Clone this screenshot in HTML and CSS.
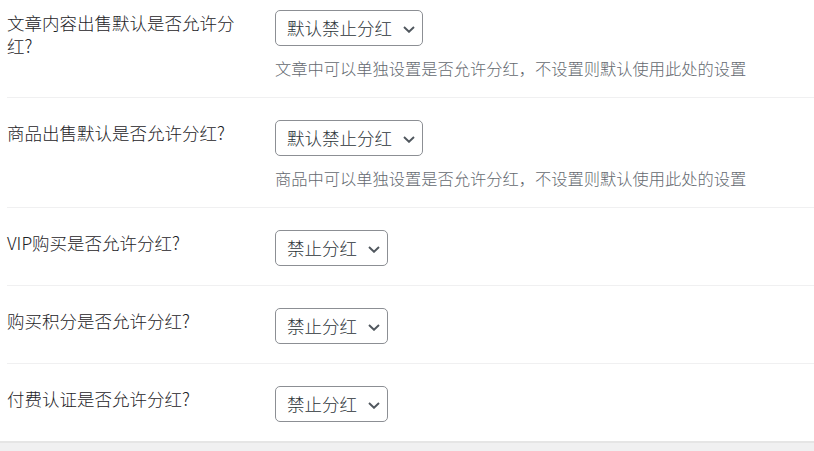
FILE: index.html
```html
<!DOCTYPE html>
<html lang="zh-CN">
<head>
    <meta charset="UTF-8">
    <meta name="viewport" content="width=device-width, initial-scale=1.0">
    <title>分红设置</title>
    <link rel="stylesheet" href="styles.css">
</head>
<body>
    <div id="settings-panel">
        <table class="form-table">
            <tr>
                <th><label for="post-share">文章内容出售默认是否允许分红?</label></th>
                <td>
                    <div class="field">
                        <span class="select-wrap">
                            <select id="post-share" name="post-share">
                                <option>默认禁止分红</option>
                                <option>默认允许分红</option>
                            </select>
                            <svg class="chevron" viewBox="0 0 12 7" width="12" height="7"><path d="M1 1 L6 5.8 L11 1" fill="none" stroke="#50575e" stroke-width="1.9"/></svg>
                        </span>
                        <p class="description">文章中可以单独设置是否允许分红，不设置则默认使用此处的设置</p>
                    </div>
                </td>
            </tr>
            <tr>
                <th><label for="goods-share">商品出售默认是否允许分红?</label></th>
                <td>
                    <div class="field">
                        <span class="select-wrap">
                            <select id="goods-share" name="goods-share">
                                <option>默认禁止分红</option>
                                <option>默认允许分红</option>
                            </select>
                            <svg class="chevron" viewBox="0 0 12 7" width="12" height="7"><path d="M1 1 L6 5.8 L11 1" fill="none" stroke="#50575e" stroke-width="1.9"/></svg>
                        </span>
                        <p class="description">商品中可以单独设置是否允许分红，不设置则默认使用此处的设置</p>
                    </div>
                </td>
            </tr>
            <tr>
                <th><label for="vip-share">VIP购买是否允许分红?</label></th>
                <td>
                    <div class="field">
                        <span class="select-wrap">
                            <select id="vip-share" name="vip-share">
                                <option>禁止分红</option>
                                <option>允许分红</option>
                            </select>
                            <svg class="chevron" viewBox="0 0 12 7" width="12" height="7"><path d="M1 1 L6 5.8 L11 1" fill="none" stroke="#50575e" stroke-width="1.9"/></svg>
                        </span>
                    </div>
                </td>
            </tr>
            <tr>
                <th><label for="credit-share">购买积分是否允许分红?</label></th>
                <td>
                    <div class="field">
                        <span class="select-wrap">
                            <select id="credit-share" name="credit-share">
                                <option>禁止分红</option>
                                <option>允许分红</option>
                            </select>
                            <svg class="chevron" viewBox="0 0 12 7" width="12" height="7"><path d="M1 1 L6 5.8 L11 1" fill="none" stroke="#50575e" stroke-width="1.9"/></svg>
                        </span>
                    </div>
                </td>
            </tr>
            <tr>
                <th><label for="verify-share">付费认证是否允许分红?</label></th>
                <td>
                    <div class="field">
                        <span class="select-wrap">
                            <select id="verify-share" name="verify-share">
                                <option>禁止分红</option>
                                <option>允许分红</option>
                            </select>
                            <svg class="chevron" viewBox="0 0 12 7" width="12" height="7"><path d="M1 1 L6 5.8 L11 1" fill="none" stroke="#50575e" stroke-width="1.9"/></svg>
                        </span>
                    </div>
                </td>
            </tr>
        </table>
    </div>
</body>
</html>
```

FILE: styles.css
```css
body {
    margin: 0;
    padding: 0;
    background-color: #f0f0f1;
    font-family: "Noto Sans CJK SC", "Noto Sans", sans-serif;
    font-weight: 300;
    color: #1d2327;
}
#settings-panel {
    margin-top: -12px;
    padding-left: 7px;
    background-color: #ffffff;
    border-bottom: 2px solid #e5e5e5;
}
.form-table {
    width: 100%;
    border-collapse: collapse;
}
.form-table tr {
    border-bottom: 1px solid #f0f0f1;
}
.form-table tr:last-child {
    border-bottom: none;
}
.form-table th {
    width: 243px;
    padding: 24px 12.5px 24px 0;
    text-align: left;
    vertical-align: top;
    font-weight: 300;
    font-size: 17.5px;
    line-height: 22.75px;
}
.form-table td {
    padding: 22px 12.5px 19px;
    vertical-align: top;
}
.field {
    display: flex;
    flex-direction: column;
    align-items: flex-start;
}
.select-wrap {
    position: relative;
    display: inline-flex;
}
select {
    appearance: none;
    -webkit-appearance: none;
    margin: 0;
    height: 36px;
    padding: 0 30px 0 11px;
    font-family: inherit;
    font-weight: 300;
    font-size: 17.5px;
    line-height: 34px;
    color: #2c3338;
    background-color: #ffffff;
    border: 1px solid #8c8f94;
    border-radius: 5px;
}
.chevron {
    position: absolute;
    right: 8px;
    top: 16px;
    pointer-events: none;
}
.description {
    margin: 10px 0 -2px;
    font-size: 16.25px;
    line-height: 24px;
    color: #646970;
}
```
